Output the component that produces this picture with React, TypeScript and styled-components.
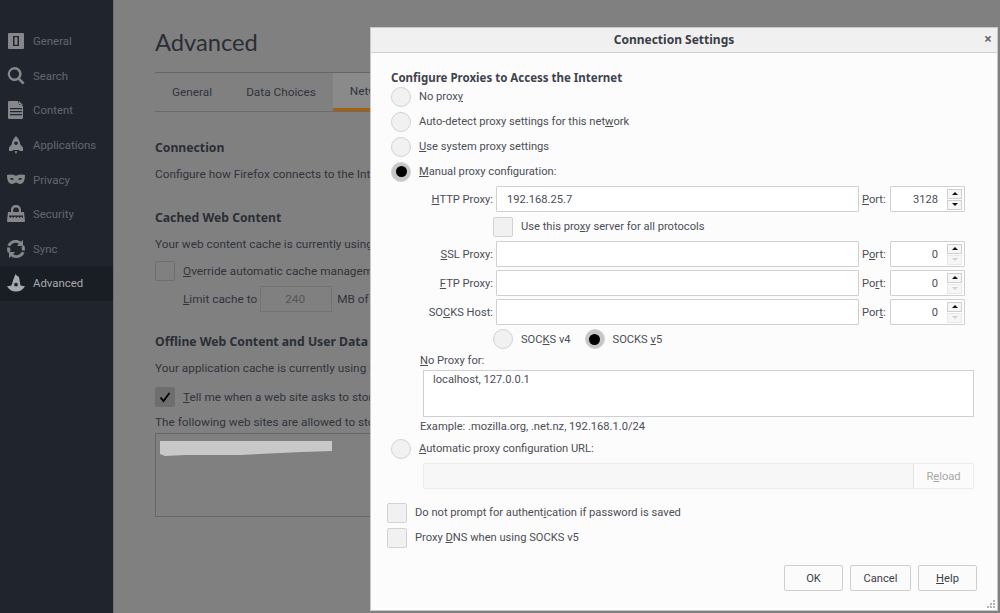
import React from 'react';
import styled, { createGlobalStyle } from 'styled-components';

const GlobalStyle = createGlobalStyle`
  html, body {
    margin: 0;
    padding: 0;
    background: #808080;
  }
  body {
    width: 1000px;
    height: 613px;
    overflow: hidden;
    font-family: Roboto, "Open Sans", sans-serif;
  }
  * {
    box-sizing: border-box;
  }
`;

const Page = styled.div`
  position: relative;
  display: flex;
  width: 1000px;
  height: 613px;
  overflow: hidden;
`;

/* ---------- dimmed preferences page ---------- */

const Sidebar = styled.nav`
  width: 114px;
  flex: none;
  padding-top: 24px;
  background: #20252d;
  border-right: 1px solid #6e6f72;
`;

const NavItem = styled.div<{ $active?: boolean }>`
  display: flex;
  align-items: center;
  gap: 8px;
  height: 34.6px;
  padding-left: 7px;
  font-size: 11.400px;
  color: ${(p) => (p.$active ? '#a9abae' : '#63676d')};
  background: ${(p) => (p.$active ? '#191d24' : 'transparent')};
  svg {
    flex: none;
    width: 18px;
    height: 18px;
    fill: ${(p) => (p.$active ? '#a9abae' : '#85878b')};
  }
`;

const Main = styled.main`
  flex: 1;
  padding: 26px 0 0 41px;
  color: #30343c;
  font-size: 11.800px;
  overflow: hidden;
`;

const Title = styled.h1`
  margin: 0 0 13px;
  height: 33px;
  font-family: Lato, sans-serif;
  font-size: 23.700px;
  line-height: 33px;
  font-weight: 400;
  color: #2a2e36;
`;

const Tabs = styled.div`
  display: flex;
  width: 800px;
  height: 40px;
  border-top: 1px solid #666;
  border-bottom: 1px solid #6a6a6a;
`;

const Tab = styled.div<{ $active?: boolean }>`
  display: flex;
  align-items: center;
  padding: 0 17px;
  white-space: nowrap;
  background: ${(p) => (p.$active ? '#8a8a8a' : 'transparent')};
  border-bottom: ${(p) => (p.$active ? '3px solid #a5610f' : '0')};
`;

const SectionHead = styled.h2<{ $top: number }>`
  margin: ${(p) => p.$top}px 0 0;
  height: 18px;
  font-family: "Noto Sans", sans-serif;
  font-size: 12.200px;
  line-height: 18px;
  font-weight: 700;
  color: #2a2e36;
`;

const Line = styled.div<{ $top: number; $indent?: number }>`
  display: flex;
  align-items: center;
  height: 18px;
  margin: ${(p) => p.$top}px 0 0 ${(p) => p.$indent || 0}px;
  white-space: nowrap;
`;

const PageCheck = styled.span<{ $checked?: boolean }>`
  display: inline-flex;
  align-items: center;
  justify-content: center;
  flex: none;
  width: 20px;
  height: 20px;
  margin-right: 8px;
  border: 1px solid #6e6e6e;
  border-radius: 2px;
  background: ${(p) => (p.$checked ? '#6e6e6e' : '#808080')};
  svg {
    width: 12px;
    height: 12px;
  }
`;

const CacheInput = styled.span`
  display: inline-flex;
  align-items: center;
  width: 72px;
  height: 26px;
  margin: 0 5px 0 3px;
  padding-left: 24px;
  border: 1px solid #747474;
  color: #565656;
`;

const SiteList = styled.div`
  width: 500px;
  height: 84px;
  margin-top: 2px;
  padding: 7px 0 0 4px;
  border: 1px solid #666;
  svg {
    display: block;
    width: 172px;
    height: 15px;
    fill: #c8c8c8;
  }
`;

/* ---------- connection settings dialog ---------- */

const Dialog = styled.section`
  position: absolute;
  left: 370px;
  top: 27px;
  width: 628px;
  height: 584px;
  background: #fcfcfc;
  border: 1px solid #c9c9c9;
  color: #4a4e56;
  font-family: Roboto, "Noto Sans", sans-serif;
  font-size: 11.150px;
`;

const DialogHeader = styled.header`
  position: relative;
  display: flex;
  align-items: center;
  justify-content: center;
  height: 25px;
  padding: 0 20px 2px 0;
  background: #f0f0f0;
  border-bottom: 1px solid #d0d0d0;
  font-family: "Noto Sans", sans-serif;
  font-size: 12px;
  font-weight: 700;
  color: #3a3e46;
`;

const CloseGlyph = styled.span`
  position: absolute;
  right: 5px;
  top: 2px;
  font-size: 14px;
  line-height: 18px;
  color: #666;
`;

const DialogBody = styled.div`
  padding: 16px 20px 0 16px;
`;

const GroupTitle = styled.div`
  height: 15px;
  margin-left: 4px;
  padding-top: 1px;
  font-family: "Noto Sans", sans-serif;
  font-size: 11.500px;
  line-height: 15px;
  font-weight: 700;
  color: #3e434c;
`;

const Row = styled.div<{ $indent?: number; $top?: number; $h?: number }>`
  display: flex;
  align-items: center;
  height: ${(p) => p.$h || 25}px;
  margin-left: ${(p) => p.$indent || 0}px;
  margin-top: ${(p) => p.$top || 0}px;
  white-space: nowrap;
`;

const Radio = styled.span<{ $checked?: boolean; $gap?: number }>`
  display: inline-flex;
  align-items: center;
  justify-content: center;
  flex: none;
  width: 20px;
  height: 20px;
  margin-left: ${(p) => p.$gap || 0}px;
  margin-right: 8px;
  border-radius: 50%;
  border: 1px solid #d2d2d2;
  background: ${(p) => (p.$checked ? '#c6c6c6' : '#f1f1f1')};
  &::after {
    content: '';
    display: ${(p) => (p.$checked ? 'block' : 'none')};
    width: 11px;
    height: 11px;
    border-radius: 50%;
    background: #000;
  }
`;

const Check = styled.span`
  flex: none;
  width: 20px;
  height: 20px;
  margin-right: 8px;
  border: 1px solid #d2d2d2;
  border-radius: 2px;
  background: #f1f1f1;
`;

const FieldLabel = styled.span`
  flex: none;
  width: 109px;
  padding-right: 3px;
  text-align: right;
`;

const TextField = styled.div`
  display: flex;
  align-items: center;
  flex: none;
  width: 363px;
  height: 26px;
  padding-left: 10px;
  background: #fff;
  border: 1px solid #d0d0d0;
  border-radius: 1px;
`;

const PortLabel = styled.span`
  flex: none;
  width: 31px;
  padding-left: 3px;
`;

const PortField = styled.div`
  display: flex;
  align-items: center;
  justify-content: flex-end;
  flex: none;
  width: 75px;
  height: 26px;
  padding-right: 2px;
  background: #fff;
  border: 1px solid #d0d0d0;
  border-radius: 1px;
`;

const PortValue = styled.span`
  margin-right: 9px;
`;

const SpinColumn = styled.div`
  display: flex;
  flex-direction: column;
  gap: 1px;
`;

const SpinButton = styled.span<{ $off?: boolean; $down?: boolean }>`
  display: flex;
  align-items: center;
  justify-content: center;
  width: 15px;
  height: 10px;
  background: #f6f6f6;
  border: 1px solid ${(p) => (p.$off ? '#e8e8e8' : '#cfcfcf')};
  &::after {
    content: '';
    width: 0;
    height: 0;
    border-left: 3px solid transparent;
    border-right: 3px solid transparent;
    ${(p) => (p.$down ? 'border-top' : 'border-bottom')}: 3px solid ${(p) => (p.$off ? '#d0d0d0' : '#111')};
  }
`;

const SmallLine = styled.div<{ $h: number; $indent: number }>`
  display: flex;
  align-items: center;
  height: ${(p) => p.$h}px;
  margin-left: ${(p) => p.$indent}px;
`;

const TextArea = styled.div`
  width: 551px;
  height: 47px;
  margin: 2px 0 0 36px;
  padding: 1px 9px;
  line-height: 16px;
  background: #fff;
  border: 1px solid #d0d0d0;
`;

const UrlRow = styled.div`
  display: flex;
  width: 551px;
  height: 26px;
  margin: 2px 0 11px 36px;
  border: 1px solid #ececec;
  border-radius: 1px;
`;

const UrlInput = styled.div`
  flex: 1;
  background: #f7f7f7;
  border-right: 1px solid #e4e4e4;
`;

const ReloadButton = styled.div`
  display: flex;
  align-items: center;
  justify-content: center;
  width: 59px;
  color: #a8a8a8;
  background: #fbfbfb;
`;

const ButtonBar = styled.div`
  display: flex;
  justify-content: flex-end;
  gap: 7px;
  margin: 15px 0 0 0;
`;

const DialogButton = styled.div<{ $w: number }>`
  display: flex;
  align-items: center;
  justify-content: center;
  width: ${(p) => p.$w}px;
  height: 26px;
  color: #3a3e46;
  background: #fbfbfb;
  border: 1px solid #cfcfcf;
  border-radius: 2px;
`;

const Grip = styled.svg`
  position: absolute;
  right: 1px;
  bottom: 1px;
  width: 10px;
  height: 10px;
  fill: #b4b4b4;
`;

const GeneralIcon = () => (
  <svg viewBox="0 0 18 18">
    <path fillRule="evenodd" d="M2 1h14a1 1 0 0 1 1 1v14a1 1 0 0 1-1 1H2a1 1 0 0 1-1-1V2a1 1 0 0 1 1-1zm4 3v10h6V4H6zm1.500 1.200h3v7.600h-3V5.200z" />
  </svg>
);
const SearchIcon = () => (
  <svg viewBox="0 0 18 18">
    <path fillRule="evenodd" d="M7.500 0a7 7 0 0 1 5.600 11.200l4.500 4.500-1.900 1.900-4.500-4.500A7 7 0 1 1 7.500 0zm0 2.400a4.600 4.600 0 1 0 0 9.200 4.600 4.600 0 0 0 0-9.200z" />
  </svg>
);
const ContentIcon = () => (
  <svg viewBox="0 0 18 18">
    <path fillRule="evenodd" d="M2 0h9l1 3 4 2v12a1 1 0 0 1-1 1H2a1 1 0 0 1-1-1V1a1 1 0 0 1 1-1zm1 7v1.200h12V7H3zm0 3v1.200h12V10H3zm0 3v1.200h12V13H3zM12 0l4 4h-4V0z" />
  </svg>
);
const ApplicationsIcon = () => (
  <svg viewBox="0 0 18 18">
    <path fillRule="evenodd" d="M9 0c2.500 2.500 4 5.500 4.300 8.500L16 11.500V15h-3.300l-.7-1H6l-.7 1H2v-3.500l2.700-3C5 5.500 6.500 2.500 9 0zm0 5.500a1.800 1.800 0 1 0 0 3.600 1.800 1.800 0 0 0 0-3.600zM7.500 15.200h3L9 18l-1.500-2.800z" />
  </svg>
);
const PrivacyIcon = () => (
  <svg viewBox="0 0 18 18">
    <path fillRule="evenodd" d="M0 4c3-1 6-.5 9 .7C12 3.500 15 3 18 4c0 5-1.500 9-5 9-2 0-2.800-1.500-4-1.500S7 13 5 13C1.500 13 0 9 0 4zm3 3.500c.8 1.400 2.800 1.700 4 .7-1-1.200-2.800-1.500-4-.7zm12 0c-1.200-.8-3-.5-4 .7 1.200 1 3.200.7 4-.7z" />
  </svg>
);
const SecurityIcon = () => (
  <svg viewBox="0 0 18 18">
    <path fillRule="evenodd" d="M9 0c3 0 5 2 5 5v2h3l1 9a1 1 0 0 1-1 1H1a1 1 0 0 1-1-1l1-9h3V5c0-3 2-5 5-5zm0 2.200C7.400 2.200 6.200 3.400 6.200 5v2h5.600V5c0-1.600-1.200-2.800-2.800-2.800zM2 10.500v1l1.500 1.500L5 11.500 6.500 13 8 11.500 9.500 13l1.500-1.500 1.500 1.500 1.500-1.500 1.500 1.500 .5-.5v-2H2z" />
  </svg>
);
const SyncIcon = () => (
  <svg viewBox="0 0 18 18">
    <path d="M9 0c2 0 3.500.6 4.800 1.700L16 0v6h-6l1.800-2.200C9 2 5.500 2.600 3.500 6L.5 5.500C1.800 2 5 0 9 0zM9 18c-2 0-3.500-.6-4.800-1.700L2 18v-6h6l-1.800 2.200C9 16 12.500 15.400 14.500 12l3 .5C16.200 16 13 18 9 18z" />
    <path d="M0 7.500h3L3.500 11 1 13C.3 11.500 0 9.500 0 7.500zM18 10.500h-3L14.500 7 17 5c.7 1.500 1 3.500 1 5.500z" />
  </svg>
);
const AdvancedIcon = () => (
  <svg viewBox="0 0 18 18">
    <path fillRule="evenodd" d="M8.500 0l1.200 1.500L12 3l1.500 8.500c1.500.3 3 .6 4.500.8-2 3.500-5 5.200-9 5.200s-7-1.700-9-5.200c1.500-.2 3-.5 4.500-.8L6.500 5 8.500 0zM9 8l-.8 1.600-1.700.2 1.200 1.200-.3 1.700L9 12l1.600.7-.3-1.700 1.200-1.200-1.700-.2L9 8z" />
  </svg>
);

const navItems = [
  { label: 'General', icon: <GeneralIcon /> },
  { label: 'Search', icon: <SearchIcon /> },
  { label: 'Content', icon: <ContentIcon /> },
  { label: 'Applications', icon: <ApplicationsIcon /> },
  { label: 'Privacy', icon: <PrivacyIcon /> },
  { label: 'Security', icon: <SecurityIcon /> },
  { label: 'Sync', icon: <SyncIcon /> },
  { label: 'Advanced', icon: <AdvancedIcon />, active: true },
];

const ports = [
  { label: <><u>S</u>SL Proxy:</>, port: <>P<u>o</u>rt:</>, top: 2 },
  { label: <><u>F</u>TP Proxy:</>, port: <>Po<u>r</u>t:</>, top: 3 },
  { label: <>SO<u>C</u>KS Host:</>, port: <>Por<u>t</u>:</>, top: 3 },
];

const Spinner = ({ downOff }: { downOff?: boolean }) => (
  <SpinColumn>
    <SpinButton />
    <SpinButton $down $off={downOff} />
  </SpinColumn>
);

const App: React.FC = () => (
  <Page>
    <GlobalStyle />
    <Sidebar>
      {navItems.map((item) => (
        <NavItem key={item.label} $active={item.active}>
          {item.icon}
          {item.label}
        </NavItem>
      ))}
    </Sidebar>

    <Main>
      <Title>Advanced</Title>
      <Tabs>
        <Tab>General</Tab>
        <Tab>Data Choices</Tab>
        <Tab $active>Network</Tab>
        <Tab>Update</Tab>
        <Tab>Certificates</Tab>
      </Tabs>
      <SectionHead $top={27}>Connection</SectionHead>
      <Line $top={8}>Configure how Firefox connects to the Internet</Line>
      <SectionHead $top={26}>Cached Web Content</SectionHead>
      <Line $top={8}>Your web content cache is currently using 350 MB of disk space</Line>
      <Line $top={9}>
        <PageCheck />
        <span><u>O</u>verride automatic cache management</span>
      </Line>
      <Line $top={10} $indent={28}>
        <span><u>L</u>imit cache to</span>
        <CacheInput>240</CacheInput>
        <span>MB of space</span>
      </Line>
      <SectionHead $top={25}>Offline Web Content and User Data</SectionHead>
      <Line $top={8}>Your application cache is currently using 0 bytes of disk space</Line>
      <Line $top={11}>
        <PageCheck $checked>
          <svg viewBox="0 0 12 12">
            <path d="M1.500 6.500l3 3.500 6-8" fill="none" stroke="#000" strokeWidth="1.800" />
          </svg>
        </PageCheck>
        <span><u>T</u>ell me when a web site asks to store data for offline use</span>
      </Line>
      <Line $top={7}>The following web sites are allowed to store data for offline use:</Line>
      <SiteList>
        <svg viewBox="0 0 172 15">
          <path d="M0 0h172v10l-30 1-22 1-40 2H25l-20 1-5-2z" />
        </svg>
      </SiteList>
    </Main>

    <Dialog>
      <DialogHeader>
        Connection Settings
        <CloseGlyph>×</CloseGlyph>
      </DialogHeader>
      <DialogBody>
        <GroupTitle>Configure Proxies to Access the Internet</GroupTitle>
        <Row $indent={4}><Radio /><span>No prox<u>y</u></span></Row>
        <Row $indent={4}><Radio /><span>Auto-detect proxy settings for this net<u>w</u>ork</span></Row>
        <Row $indent={4}><Radio /><span><u>U</u>se system proxy settings</span></Row>
        <Row $indent={4}><Radio $checked /><span><u>M</u>anual proxy configuration:</span></Row>

        <Row $h={26} $top={2}>
          <FieldLabel><u>H</u>TTP Proxy:</FieldLabel>
          <TextField>192.168.25.7</TextField>
          <PortLabel><u>P</u>ort:</PortLabel>
          <PortField><PortValue>3128</PortValue><Spinner /></PortField>
        </Row>
        <Row $indent={106} $top={2}><Check /><span>Use this pro<u>x</u>y server for all protocols</span></Row>

        {ports.map((row, i) => (
          <Row key={i} $h={26} $top={row.top}>
            <FieldLabel>{row.label}</FieldLabel>
            <TextField />
            <PortLabel>{row.port}</PortLabel>
            <PortField><PortValue>0</PortValue><Spinner downOff /></PortField>
          </Row>
        ))}

        <Row $indent={106} $h={26} $top={1}>
          <Radio />
          <span>SOC<u>K</u>S v4</span>
          <Radio $gap={14} $checked />
          <span>SOCKS <u>v</u>5</span>
        </Row>
        <SmallLine $h={16} $indent={33}><span><u>N</u>o Proxy for:</span></SmallLine>
        <TextArea>localhost, 127.0.0.1</TextArea>
        <SmallLine $h={19} $indent={33}>Example: .mozilla.org, .net.nz, 192.168.1.0/24</SmallLine>
        <Row $indent={4}><Radio /><span><u>A</u>utomatic proxy configuration URL:</span></Row>
        <UrlRow>
          <UrlInput />
          <ReloadButton><span>R<u>e</u>load</span></ReloadButton>
        </UrlRow>
        <Row><Check /><span>Do not prompt for authent<u>i</u>cation if password is saved</span></Row>
        <Row><Check /><span>Proxy <u>D</u>NS when using SOCKS v5</span></Row>
        <ButtonBar>
          <DialogButton $w={59}>OK</DialogButton>
          <DialogButton $w={61}>Cancel</DialogButton>
          <DialogButton $w={59}><span><u>H</u>elp</span></DialogButton>
        </ButtonBar>
      </DialogBody>
      <Grip viewBox="0 0 10 10">
        <rect x="7" y="1" width="2" height="2" />
        <rect x="4" y="4" width="2" height="2" />
        <rect x="7" y="4" width="2" height="2" />
        <rect x="1" y="7" width="2" height="2" />
        <rect x="4" y="7" width="2" height="2" />
        <rect x="7" y="7" width="2" height="2" />
      </Grip>
    </Dialog>
  </Page>
);

export default App;
